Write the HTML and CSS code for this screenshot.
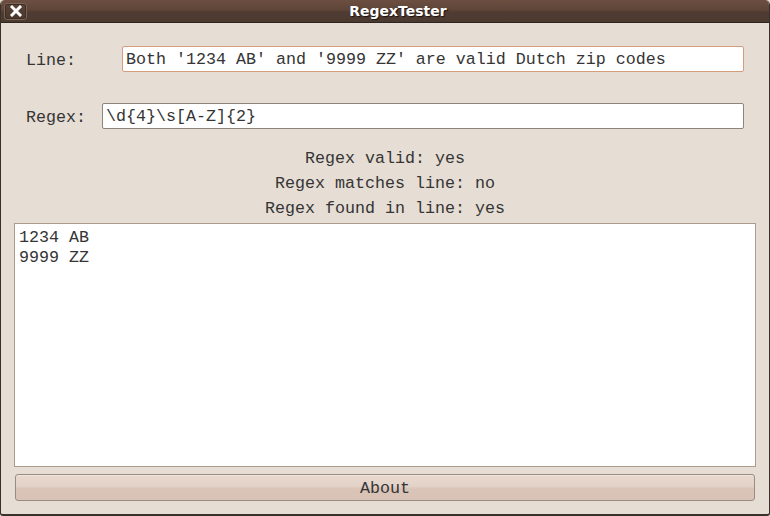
FILE: index.html
```html
<!DOCTYPE html>
<html>
<head>
<meta charset="utf-8">
<link rel="stylesheet" href="styles.css">
</head>
<body>
<div class="window">
  <div class="titlebar">
    <div class="close">
      <svg width="12" height="12" viewBox="0 0 12 12"><path d="M2 2 L10 10 M10 2 L2 10" stroke="#fff" stroke-width="3" stroke-linecap="square"/></svg>
    </div>
    <div class="title">RegexTester</div>
  </div>
  <div class="content">
    <div class="row row-line">
      <span class="label label-line">Line:</span>
      <div class="input focused">Both '1234 AB' and '9999 ZZ' are valid Dutch zip codes</div>
    </div>
    <div class="row row-regex">
      <span class="label label-regex">Regex:</span>
      <div class="input">\d{4}\s[A-Z]{2}</div>
    </div>
    <div class="status">
      <div>Regex valid: yes</div>
      <div>Regex matches line: no</div>
      <div>Regex found in line: yes</div>
    </div>
    <div class="textarea">
      <div>1234 AB</div>
      <div>9999 ZZ</div>
    </div>
    <div class="button">About</div>
  </div>
</div>
</body>
</html>
```
FILE: styles.css
```css
* { box-sizing: border-box; }
html, body { margin: 0; padding: 0; background: #e6ddd3; }
body { width: 770px; height: 516px; overflow: hidden; }
.window {
  width: 770px; height: 516px;
  display: flex; flex-direction: column;
  background: #e6ddd4;
  border-left: 1px solid #3a302b;
  border-right: 1px solid #3a302b;
  border-bottom: 2px solid #3a302b;
  border-radius: 5px 5px 3px 3px;
  overflow: hidden;
  font-family: "Liberation Mono", "Courier New", monospace;
  font-size: 16.67px;
  color: #353535;
}
.titlebar {
  height: 23px;
  flex: none;
  background: linear-gradient(#6c4f41 0%, #5e4538 45%, #4f3b31 55%, #4c3a30 100%);
  border-bottom: 1px solid #2e2521;
  display: flex; align-items: center;
}
.close {
  margin-left: 3px;
  width: 23px; height: 17px;
  border: 1px solid #7a6254;
  border-radius: 3px;
  background: linear-gradient(#5a4236, #4a372d);
  box-shadow: inset 0 0 0 1px #3d2e26;
  display: flex; align-items: center; justify-content: center;
}
.close svg { display: block; }
.title {
  flex: 1;
  text-align: center;
  font-family: "DejaVu Sans", sans-serif;
  font-weight: bold;
  font-size: 14px;
  color: #ffffff;
  text-shadow: 1px 1px 1px #1a120e;
}
.content {
  flex: 1;
  display: flex; flex-direction: column;
  padding: 0 13px 0 13px;
}
.row {
  display: flex; align-items: center;
  padding: 0 12px;
  height: 26px;
}
.row-line { margin-top: 23px; }
.row-regex { margin-top: 31px; }
.label { flex: none; padding-top: 2px; }
.label-line { width: 96px; }
.label-regex { width: 76px; }
.input {
  flex: 1;
  height: 26px;
  background: #fff;
  border: 1px solid #8e8479;
  border-radius: 2px;
  padding: 1px 3px 0 3px;
  line-height: 24px;
  white-space: pre;
}
.input.focused { border-color: #d69c7e; }
.status {
  margin-top: 16px;
  text-align: center;
  line-height: 25px;
  padding-top: 1px;
}
.textarea {
  margin-top: 2px;
  height: 244px;
  background: #fff;
  border: 1px solid #ab9c8e;
  padding: 4px 4px;
  line-height: 20px;
}
.button {
  margin: 7px 1px 0 1px;
  height: 27px;
  border: 1px solid #9b8c82;
  border-radius: 3px;
  background: linear-gradient(#e8d9cf 0%, #e3d2c7 45%, #d9c4b7 55%, #d8c3b6 100%);
  box-shadow: inset 0 1px 0 #efe4dc;
  text-align: center;
  line-height: 26px;
  padding-top: 1px;
}
```
